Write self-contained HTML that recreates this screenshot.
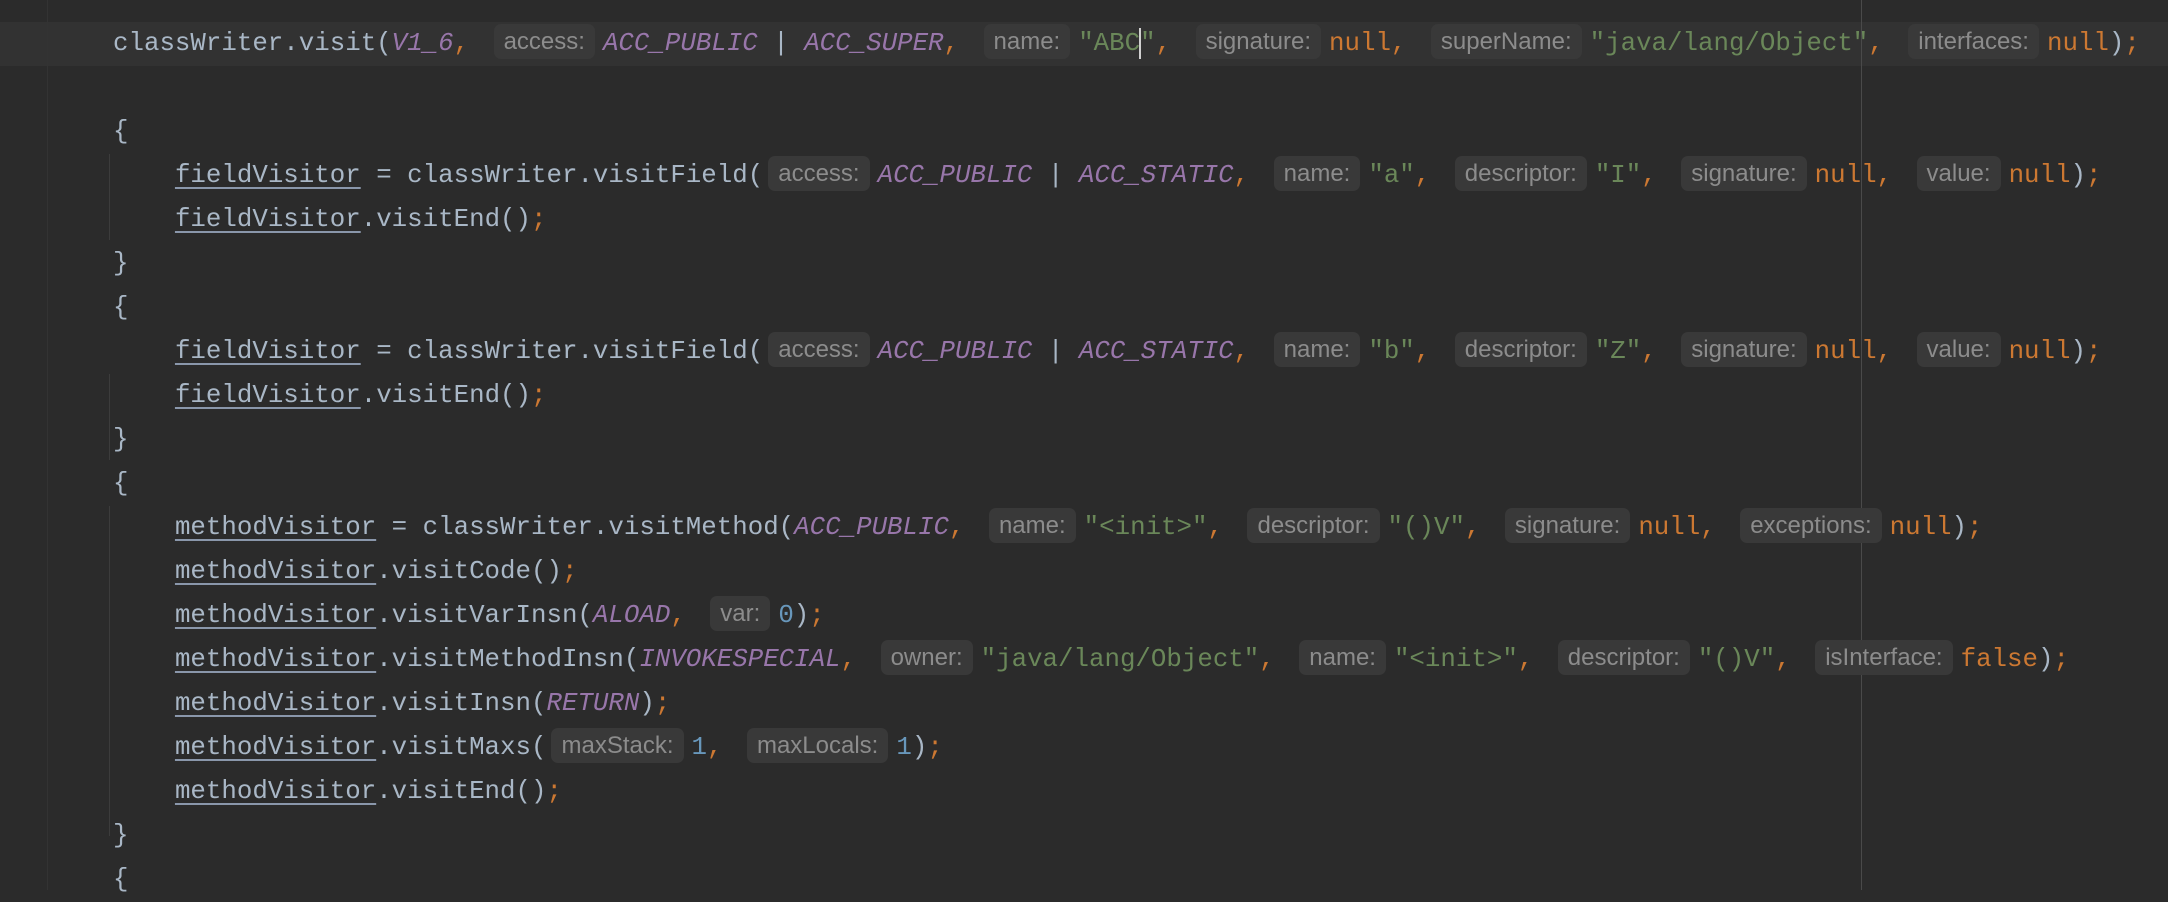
<!DOCTYPE html>
<html><head><meta charset="utf-8"><style>
html,body{margin:0;padding:0;background:#2b2b2b;width:2168px;height:890px;overflow:hidden}
.l{position:absolute;left:113px;height:44px;line-height:44px;white-space:pre;font-family:"Liberation Mono",monospace;font-size:25.8px;color:#a9b7c6}
.cur{position:absolute;left:0;top:22px;width:2168px;height:44px;background:#323232}
.vl{position:absolute;width:1px;background:#3c3c3c}
.h{display:inline-block;height:35px;line-height:35px;padding:0 10px;margin:0 8px 0 9px;background:#393939;border-radius:7px;color:#8c8c8c;font-family:"Liberation Sans",sans-serif;font-size:24px;vertical-align:middle;position:relative;top:-2px}
.hh{margin-left:5px}
.p{color:#9876aa;font-style:italic}
.o{color:#cc7832}
.g{color:#6a8759}
.n{color:#6897bb}
.u{text-decoration:underline;text-decoration-color:#8a97ab;text-decoration-thickness:2px;text-underline-offset:5px}
.caret{display:inline-block;width:2px;height:31px;background:#d0d0d0;vertical-align:middle;margin:0 -1px}
</style></head><body>
<div class="cur"></div>
<div class="vl" style="left:47px;top:0;height:890px;background:#333"></div>
<div class="vl" style="left:1861px;top:0;height:890px;background:#4a4a4a"></div>
<div class="vl" style="left:109px;top:154px;height:86px"></div>
<div class="vl" style="left:109px;top:374px;height:86px"></div>
<div class="vl" style="left:109px;top:506px;height:330px"></div>

<div class="l" style="top:22px">classWriter.visit(<span class="p">V1_6</span><span class="o">, </span><span class="h">access:</span><span class="p">ACC_PUBLIC</span> | <span class="p">ACC_SUPER</span><span class="o">, </span><span class="h">name:</span><span class="g">"ABC<span class="caret"></span>"</span><span class="o">, </span><span class="h">signature:</span><span class="o">null, </span><span class="h">superName:</span><span class="g">"java/lang/Object"</span><span class="o">, </span><span class="h">interfaces:</span><span class="o">null</span>)<span class="o">;</span></div>

<div class="l" style="top:110px">{</div>
<div class="l" style="top:154px">    <span class="u">fieldVisitor</span> = classWriter.visitField(<span class="h hh">access:</span><span class="p">ACC_PUBLIC</span> | <span class="p">ACC_STATIC</span><span class="o">, </span><span class="h">name:</span><span class="g">"a"</span><span class="o">, </span><span class="h">descriptor:</span><span class="g">"I"</span><span class="o">, </span><span class="h">signature:</span><span class="o">null, </span><span class="h">value:</span><span class="o">null</span>)<span class="o">;</span></div>
<div class="l" style="top:198px">    <span class="u">fieldVisitor</span>.visitEnd()<span class="o">;</span></div>
<div class="l" style="top:242px">}</div>
<div class="l" style="top:286px">{</div>
<div class="l" style="top:330px">    <span class="u">fieldVisitor</span> = classWriter.visitField(<span class="h hh">access:</span><span class="p">ACC_PUBLIC</span> | <span class="p">ACC_STATIC</span><span class="o">, </span><span class="h">name:</span><span class="g">"b"</span><span class="o">, </span><span class="h">descriptor:</span><span class="g">"Z"</span><span class="o">, </span><span class="h">signature:</span><span class="o">null, </span><span class="h">value:</span><span class="o">null</span>)<span class="o">;</span></div>
<div class="l" style="top:374px">    <span class="u">fieldVisitor</span>.visitEnd()<span class="o">;</span></div>
<div class="l" style="top:418px">}</div>
<div class="l" style="top:462px">{</div>
<div class="l" style="top:506px">    <span class="u">methodVisitor</span> = classWriter.visitMethod(<span class="p">ACC_PUBLIC</span><span class="o">, </span><span class="h">name:</span><span class="g">"&lt;init&gt;"</span><span class="o">, </span><span class="h">descriptor:</span><span class="g">"()V"</span><span class="o">, </span><span class="h">signature:</span><span class="o">null, </span><span class="h">exceptions:</span><span class="o">null</span>)<span class="o">;</span></div>
<div class="l" style="top:550px">    <span class="u">methodVisitor</span>.visitCode()<span class="o">;</span></div>
<div class="l" style="top:594px">    <span class="u">methodVisitor</span>.visitVarInsn(<span class="p">ALOAD</span><span class="o">, </span><span class="h">var:</span><span class="n">0</span>)<span class="o">;</span></div>
<div class="l" style="top:638px">    <span class="u">methodVisitor</span>.visitMethodInsn(<span class="p">INVOKESPECIAL</span><span class="o">, </span><span class="h">owner:</span><span class="g">"java/lang/Object"</span><span class="o">, </span><span class="h">name:</span><span class="g">"&lt;init&gt;"</span><span class="o">, </span><span class="h">descriptor:</span><span class="g">"()V"</span><span class="o">, </span><span class="h">isInterface:</span><span class="o">false</span>)<span class="o">;</span></div>
<div class="l" style="top:682px">    <span class="u">methodVisitor</span>.visitInsn(<span class="p">RETURN</span>)<span class="o">;</span></div>
<div class="l" style="top:726px">    <span class="u">methodVisitor</span>.visitMaxs(<span class="h hh">maxStack:</span><span class="n">1</span><span class="o">, </span><span class="h">maxLocals:</span><span class="n">1</span>)<span class="o">;</span></div>
<div class="l" style="top:770px">    <span class="u">methodVisitor</span>.visitEnd()<span class="o">;</span></div>
<div class="l" style="top:814px">}</div>
<div class="l" style="top:858px">{</div>
</body></html>
